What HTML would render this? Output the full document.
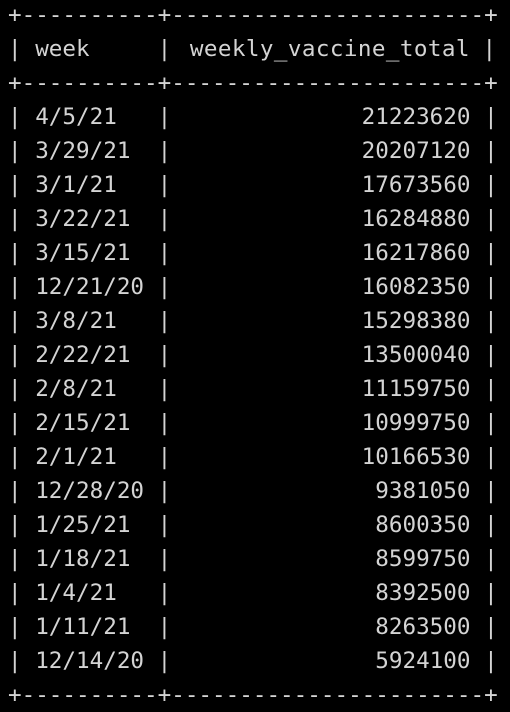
<!DOCTYPE html>
<html><head><style>
html,body{margin:0;padding:0;background:#000;width:510px;height:712px;overflow:hidden}
pre{margin:0;position:absolute;left:8px;top:-2px;font-family:"DejaVu Sans Mono","Liberation Mono",monospace;font-size:22.6px;line-height:34px;color:#d4d4d4}
.h{position:relative;left:5px;letter-spacing:0.4px}
.p{position:relative;left:4px}
</style></head><body><pre>+----------+-----------------------+
| week     | <span class="h">weekly_vaccine_total</span> <span class="p">|</span>
+----------+-----------------------+
| 4/5/21   |              21223620 |
| 3/29/21  |              20207120 |
| 3/1/21   |              17673560 |
| 3/22/21  |              16284880 |
| 3/15/21  |              16217860 |
| 12/21/20 |              16082350 |
| 3/8/21   |              15298380 |
| 2/22/21  |              13500040 |
| 2/8/21   |              11159750 |
| 2/15/21  |              10999750 |
| 2/1/21   |              10166530 |
| 12/28/20 |               9381050 |
| 1/25/21  |               8600350 |
| 1/18/21  |               8599750 |
| 1/4/21   |               8392500 |
| 1/11/21  |               8263500 |
| 12/14/20 |               5924100 |
+----------+-----------------------+</pre></body></html>
